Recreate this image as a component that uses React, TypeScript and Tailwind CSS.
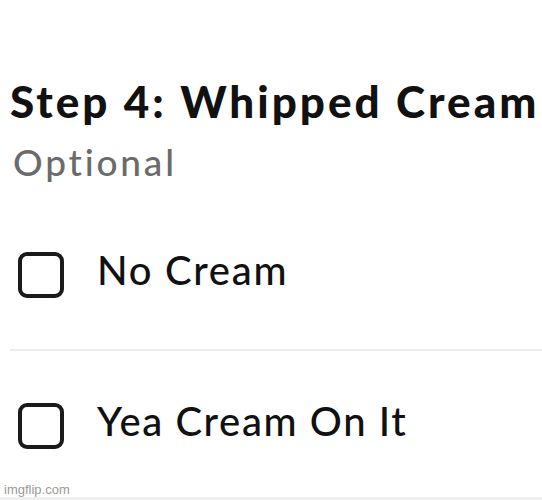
import React from "react";

function Box() {
  return <div className="w-[46px] h-[46px] shrink-0 rounded-[9px] border-[4px] border-[#1a1a1a]" />;
}

export default function App() {
  return (
    <div
      className="relative w-[542px] h-[500px] bg-white overflow-hidden text-[#111]"
      style={{ fontFamily: "Lato, 'Open Sans', sans-serif" }}
    >
      <div className="pt-[75px] pl-[10px]">
        <h1 className="text-[44px] leading-[52px] font-black tracking-[3px] whitespace-nowrap">Step 4: Whipped Cream</h1>
        <p className="mt-[13px] pl-[3px] text-[37px] leading-[44px] font-medium text-[#6b6b6b] tracking-[2.8px]">Optional</p>
      </div>
      <div className="mt-[16px]">
        <div className="h-[149px] flex items-center pl-[18px] gap-[33px]">
          <Box />
          <span className="mb-[10px] text-[40px] leading-none font-medium tracking-[1.7px]">No Cream</span>
        </div>
        <div className="ml-[10px] h-[2px] bg-[#ededed]" />
        <div className="h-[149px] flex items-center pl-[18px] gap-[33px]">
          <Box />
          <span className="mb-[10px] text-[40px] leading-none font-medium tracking-[1.6px]">Yea Cream On It</span>
        </div>
      </div>
      <div className="absolute left-[4px] bottom-[4px] text-[13px] leading-none text-[#9a9a9a]" style={{ fontFamily: "Arial, 'Liberation Sans', sans-serif" }}>
        imgflip.com
      </div>
      <div className="absolute left-0 right-0 bottom-0 h-[3px] bg-[#f0f0f0]" />
    </div>
  );
}
